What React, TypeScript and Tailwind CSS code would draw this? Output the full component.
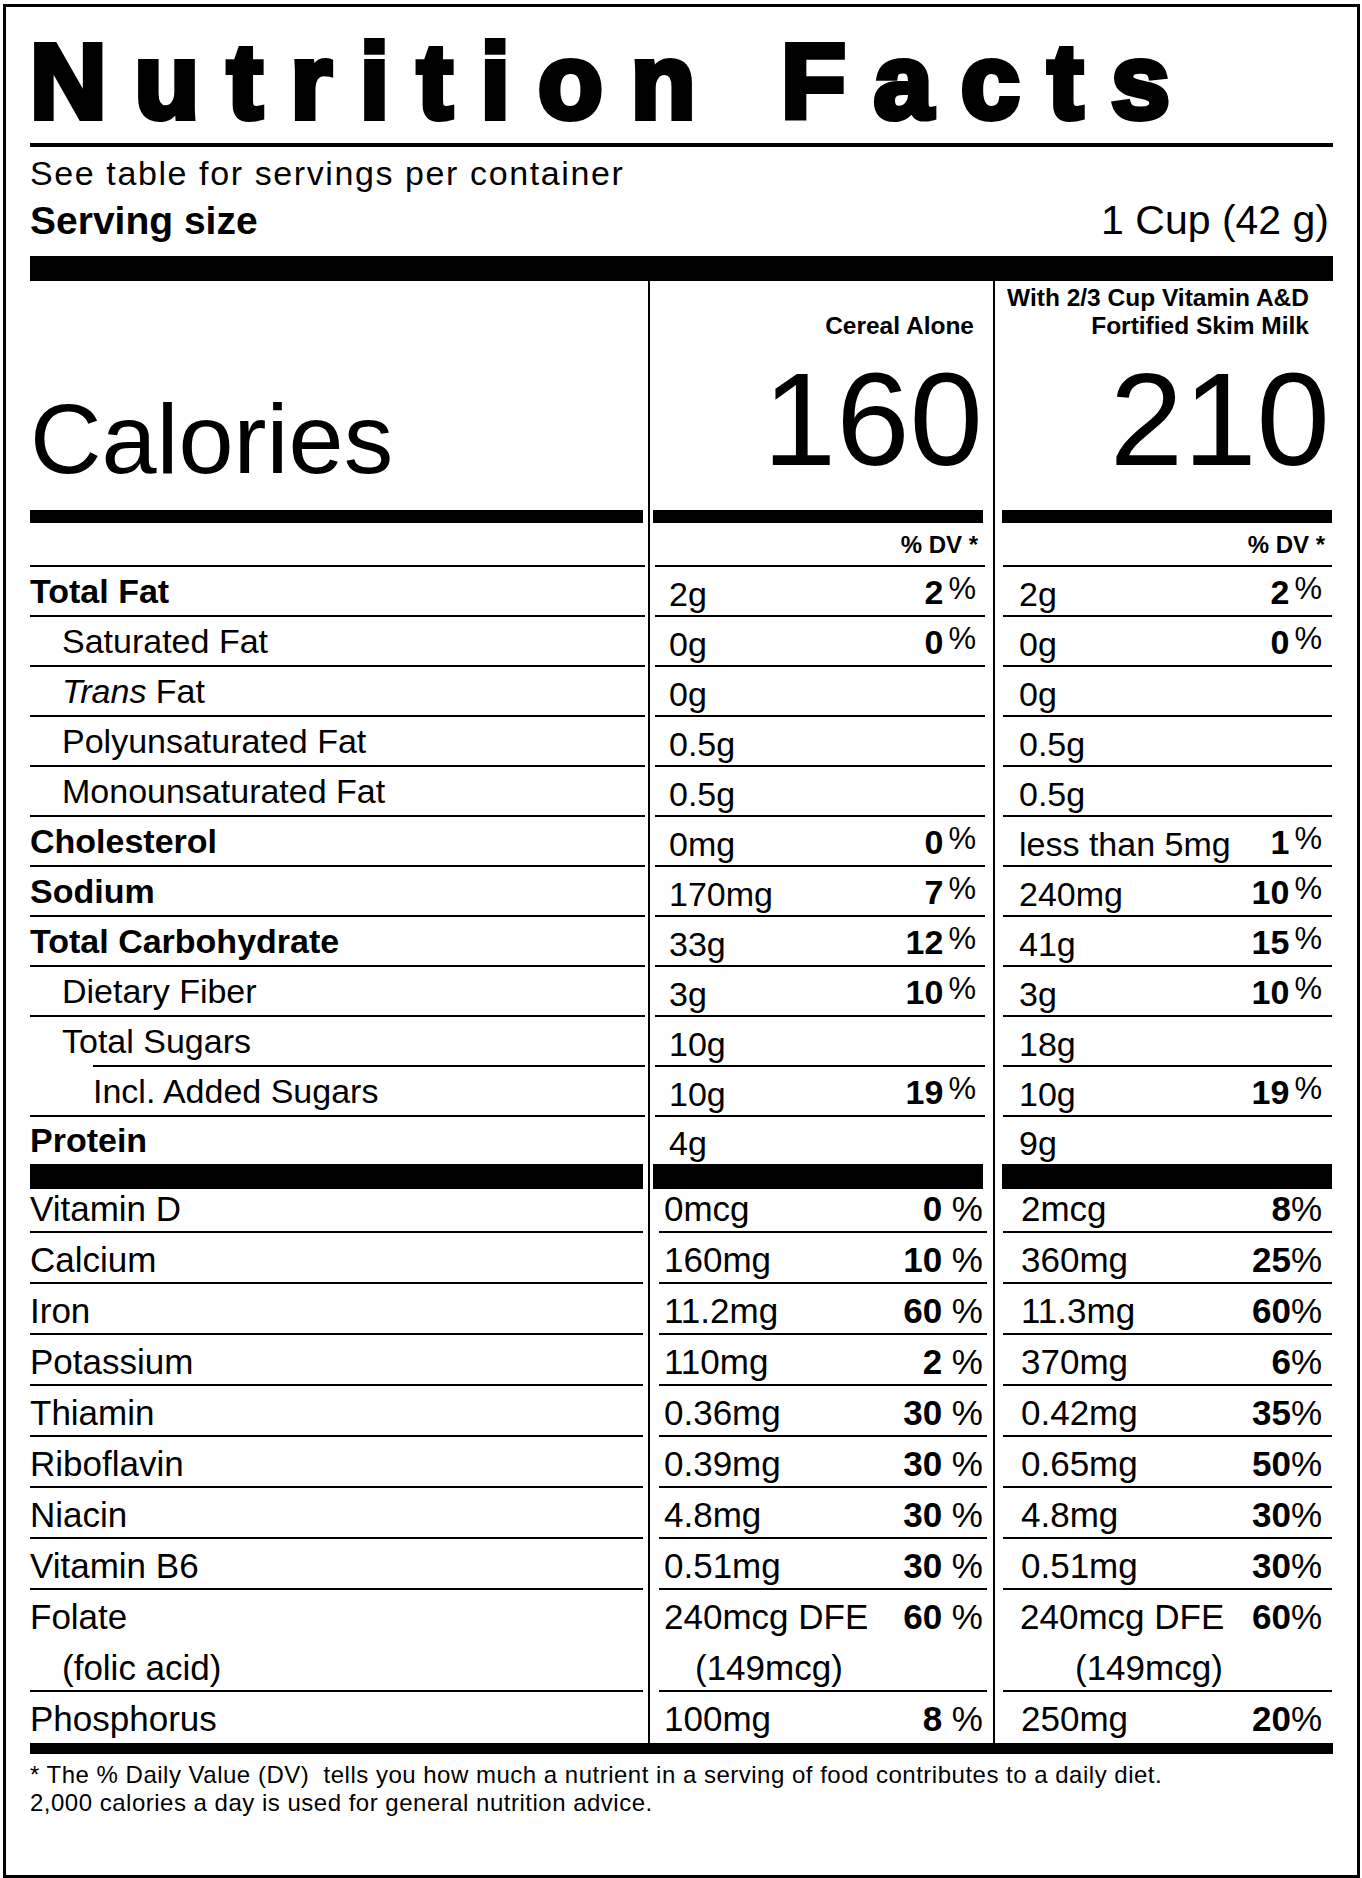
import React from "react";

type Nutrient = {
  label: React.ReactNode;
  bold?: boolean;
  indent?: 0 | 1 | 2;
  a: string;
  aDv?: string;
  b: string;
  bDv?: string;
  lineIndent?: boolean;
};

const nutrients: Nutrient[] = [
  { label: "Total Fat", bold: true, a: "2g", aDv: "2", b: "2g", bDv: "2" },
  { label: "Saturated Fat", indent: 1, a: "0g", aDv: "0", b: "0g", bDv: "0" },
  {
    label: (
      <>
        <i>Trans</i> Fat
      </>
    ),
    indent: 1,
    a: "0g",
    b: "0g",
  },
  { label: "Polyunsaturated Fat", indent: 1, a: "0.5g", b: "0.5g" },
  { label: "Monounsaturated Fat", indent: 1, a: "0.5g", b: "0.5g" },
  { label: "Cholesterol", bold: true, a: "0mg", aDv: "0", b: "less than 5mg", bDv: "1" },
  { label: "Sodium", bold: true, a: "170mg", aDv: "7", b: "240mg", bDv: "10" },
  { label: "Total Carbohydrate", bold: true, a: "33g", aDv: "12", b: "41g", bDv: "15" },
  { label: "Dietary Fiber", indent: 1, a: "3g", aDv: "10", b: "3g", bDv: "10" },
  { label: "Total Sugars", indent: 1, a: "10g", b: "18g", lineIndent: true },
  { label: "Incl. Added Sugars", indent: 2, a: "10g", aDv: "19", b: "10g", bDv: "19" },
  { label: "Protein", bold: true, a: "4g", b: "9g" },
];

// label, cereal, cereal dv, with milk, with milk dv
const vitamins: [string, string, string, string, string][] = [
  ["Vitamin D", "0mcg", "0", "2mcg", "8"],
  ["Calcium", "160mg", "10", "360mg", "25"],
  ["Iron", "11.2mg", "60", "11.3mg", "60"],
  ["Potassium", "110mg", "2", "370mg", "6"],
  ["Thiamin", "0.36mg", "30", "0.42mg", "35"],
  ["Riboflavin", "0.39mg", "30", "0.65mg", "50"],
  ["Niacin", "4.8mg", "30", "4.8mg", "30"],
  ["Vitamin B6", "0.51mg", "30", "0.51mg", "30"],
];

const indentClass = ["", "pl-[32px]", "pl-[63px]"];

function RaisedDv({ value }: { value?: string }) {
  if (!value) return null;
  return (
    <span className="whitespace-nowrap">
      <span className="font-bold">{value}</span>
      <span className="relative -top-[5px] ml-[5px] text-[31px]">%</span>
    </span>
  );
}

function NutrientRow({ n, last }: { n: Nutrient; last: boolean }) {
  const h = last ? "h-[47px]" : "h-[48px]";
  return (
    <div className="grid grid-cols-[618px_345px_340px] text-[34px]">
      <div className="pr-[3px]">
        <div
          className={`flex ${h} items-end pb-[6px] leading-[36px] ${indentClass[n.indent ?? 0]} ${
            n.bold ? "font-bold" : ""
          }`}
        >
          <span>{n.label}</span>
        </div>
        {!last && <div className={`h-[2px] bg-black ${n.lineIndent ? "ml-[63px]" : ""}`} />}
      </div>
      <div className="border-l-2 border-black pl-[5px] pr-[8px]">
        <div className={`flex ${h} items-end justify-between pb-[3px] pl-[14px] pr-[9px] leading-[36px]`}>
          <span>{n.a}</span>
          <RaisedDv value={n.aDv} />
        </div>
        {!last && <div className="h-[2px] bg-black" />}
      </div>
      <div className="border-l-2 border-black pl-[8px] pr-[1px]">
        <div className={`flex ${h} items-end justify-between pb-[3px] pl-[16px] pr-[10px] leading-[36px]`}>
          <span>{n.b}</span>
          <RaisedDv value={n.bDv} />
        </div>
        {!last && <div className="h-[2px] bg-black" />}
      </div>
    </div>
  );
}

function VitaminRow({ v, first }: { v: [string, string, string, string, string]; first: boolean }) {
  const h = first ? "h-[42px]" : "h-[49px]";
  const [label, a, aDv, b, bDv] = v;
  return (
    <div className="grid grid-cols-[618px_345px_340px] text-[35px]">
      <div className="pr-[5px]">
        <div className={`flex ${h} items-end pb-[3px] leading-[38px]`}>{label}</div>
        <div className="h-[2px] bg-black" />
      </div>
      <div className="border-l-2 border-black pl-[9px] pr-[6px]">
        <div className={`flex ${h} items-end justify-between pb-[3px] pl-[5px] pr-[4px] leading-[38px]`}>
          <span>{a}</span>
          <span>
            <span className="font-bold">{aDv}</span> %
          </span>
        </div>
        <div className="h-[2px] bg-black" />
      </div>
      <div className="border-l-2 border-black pl-[8px] pr-[1px]">
        <div className={`flex ${h} items-end justify-between pb-[3px] pl-[18px] pr-[10px] leading-[38px]`}>
          <span>{b}</span>
          <span>
            <span className="font-bold">{bDv}</span>%
          </span>
        </div>
        <div className="h-[2px] bg-black" />
      </div>
    </div>
  );
}

function ThickBar({ height }: { height: string }) {
  return (
    <div className="grid grid-cols-[618px_345px_340px]">
      <div className="pr-[5px]">
        <div className={`${height} bg-black`} />
      </div>
      <div className="border-l-2 border-black pl-[3px] pr-[10px]">
        <div className={`${height} bg-black`} />
      </div>
      <div className="border-l-2 border-black pl-[7px] pr-[1px]">
        <div className={`${height} bg-black`} />
      </div>
    </div>
  );
}

export default function App() {
  return (
    <div className="min-h-[1878px] bg-white pl-[3px] pt-[4px] font-['Liberation_Sans',Arial,sans-serif] text-black">
      <div className="h-[1874px] w-[1357px] border-[3px] border-black px-[24px]">
        <h1 className="whitespace-nowrap pt-[21px] text-[106px] font-bold leading-[106px] tracking-[28px] [-webkit-text-stroke:6px_#000]">
          Nutrition Facts
        </h1>
        <div className="mt-[9px] h-[4px] bg-black" />

        <div className="mt-[7px] text-[34px] leading-[38px] tracking-[1.6px]">
          See table for servings per container
        </div>
        <div className="mt-[6px] flex items-baseline justify-between leading-[44px]">
          <span className="text-[39px] font-bold">Serving size</span>
          <span className="pr-[4px] text-[41px]">1 Cup (42 g)</span>
        </div>
        <div className="mt-[13px] h-[25px] bg-black" />

        {/* calories header */}
        <div className="grid grid-cols-[618px_345px_340px]">
          <div className="h-[229px] pt-[108px]">
            <div className="text-[99px] leading-[100px]">Calories</div>
          </div>
          <div className="flex flex-col items-end border-l-2 border-black">
            <div className="mt-[31px] pr-[19px] text-[24.5px] font-bold leading-[28px]">Cereal Alone</div>
            <div className="mt-[14px] pr-[10px] text-[132px] leading-[132px]">160</div>
          </div>
          <div className="flex flex-col items-end border-l-2 border-black">
            <div className="mt-[3px] pr-[24px] text-right text-[24.5px] font-bold leading-[28px]">
              With 2/3 Cup Vitamin A&amp;D
              <br />
              Fortified Skim Milk
            </div>
            <div className="mt-[14px] pr-[3px] text-[132px] leading-[132px]">210</div>
          </div>
        </div>

        <ThickBar height="h-[13px]" />

        {/* % DV header */}
        <div className="grid grid-cols-[618px_345px_340px]">
          <div className="pr-[3px]">
            <div className="h-[42px]" />
            <div className="h-[2px] bg-black" />
          </div>
          <div className="border-l-2 border-black pl-[5px] pr-[8px]">
            <div className="h-[42px] pr-[7px] pt-[8px] text-right text-[24px] font-bold leading-[28px]">% DV *</div>
            <div className="h-[2px] bg-black" />
          </div>
          <div className="border-l-2 border-black pl-[8px] pr-[1px]">
            <div className="h-[42px] pr-[7px] pt-[8px] text-right text-[24px] font-bold leading-[28px]">% DV *</div>
            <div className="h-[2px] bg-black" />
          </div>
        </div>

        {nutrients.map((n, i) => (
          <NutrientRow key={i} n={n} last={i === nutrients.length - 1} />
        ))}

        <ThickBar height="h-[25px]" />

        {vitamins.map((v, i) => (
          <VitaminRow key={v[0]} v={v} first={i === 0} />
        ))}

        {/* folate, two lines */}
        <div className="grid grid-cols-[618px_345px_340px] text-[35px] leading-[38px]">
          <div className="pr-[5px]">
            <div className="h-[100px] pt-[8px]">
              <div>Folate</div>
              <div className="mt-[13px] pl-[32px]">(folic acid)</div>
            </div>
            <div className="h-[2px] bg-black" />
          </div>
          <div className="border-l-2 border-black pl-[9px] pr-[6px]">
            <div className="h-[100px] pl-[5px] pr-[4px] pt-[8px]">
              <div className="flex justify-between">
                <span>240mcg DFE</span>
                <span>
                  <span className="font-bold">60</span> %
                </span>
              </div>
              <div className="mt-[13px] pl-[31px]">(149mcg)</div>
            </div>
            <div className="h-[2px] bg-black" />
          </div>
          <div className="border-l-2 border-black pl-[8px] pr-[1px]">
            <div className="h-[100px] pl-[17px] pr-[10px] pt-[8px]">
              <div className="flex justify-between">
                <span>240mcg DFE</span>
                <span>
                  <span className="font-bold">60</span>%
                </span>
              </div>
              <div className="mt-[13px] pl-[55px]">(149mcg)</div>
            </div>
            <div className="h-[2px] bg-black" />
          </div>
        </div>

        {/* phosphorus */}
        <div className="grid grid-cols-[618px_345px_340px] text-[35px] leading-[38px]">
          <div className="h-[51px] pt-[8px]">Phosphorus</div>
          <div className="border-l-2 border-black pl-[9px] pr-[6px]">
            <div className="flex h-[51px] justify-between pl-[5px] pr-[4px] pt-[8px]">
              <span>100mg</span>
              <span>
                <span className="font-bold">8</span> %
              </span>
            </div>
          </div>
          <div className="border-l-2 border-black pl-[8px] pr-[1px]">
            <div className="flex h-[51px] justify-between pl-[18px] pr-[10px] pt-[8px]">
              <span>250mg</span>
              <span>
                <span className="font-bold">20</span>%
              </span>
            </div>
          </div>
        </div>
        <div className="h-[11px] bg-black" />

        <div className="mt-[7px] text-[24px] leading-[28px] tracking-[0.5px]">
          <p>{"* The % Daily Value (DV)\u00a0 tells you how much a nutrient in a serving of food contributes to a daily diet."}</p>
          <p>2,000 calories a day is used for general nutrition advice.</p>
        </div>
      </div>
    </div>
  );
}
